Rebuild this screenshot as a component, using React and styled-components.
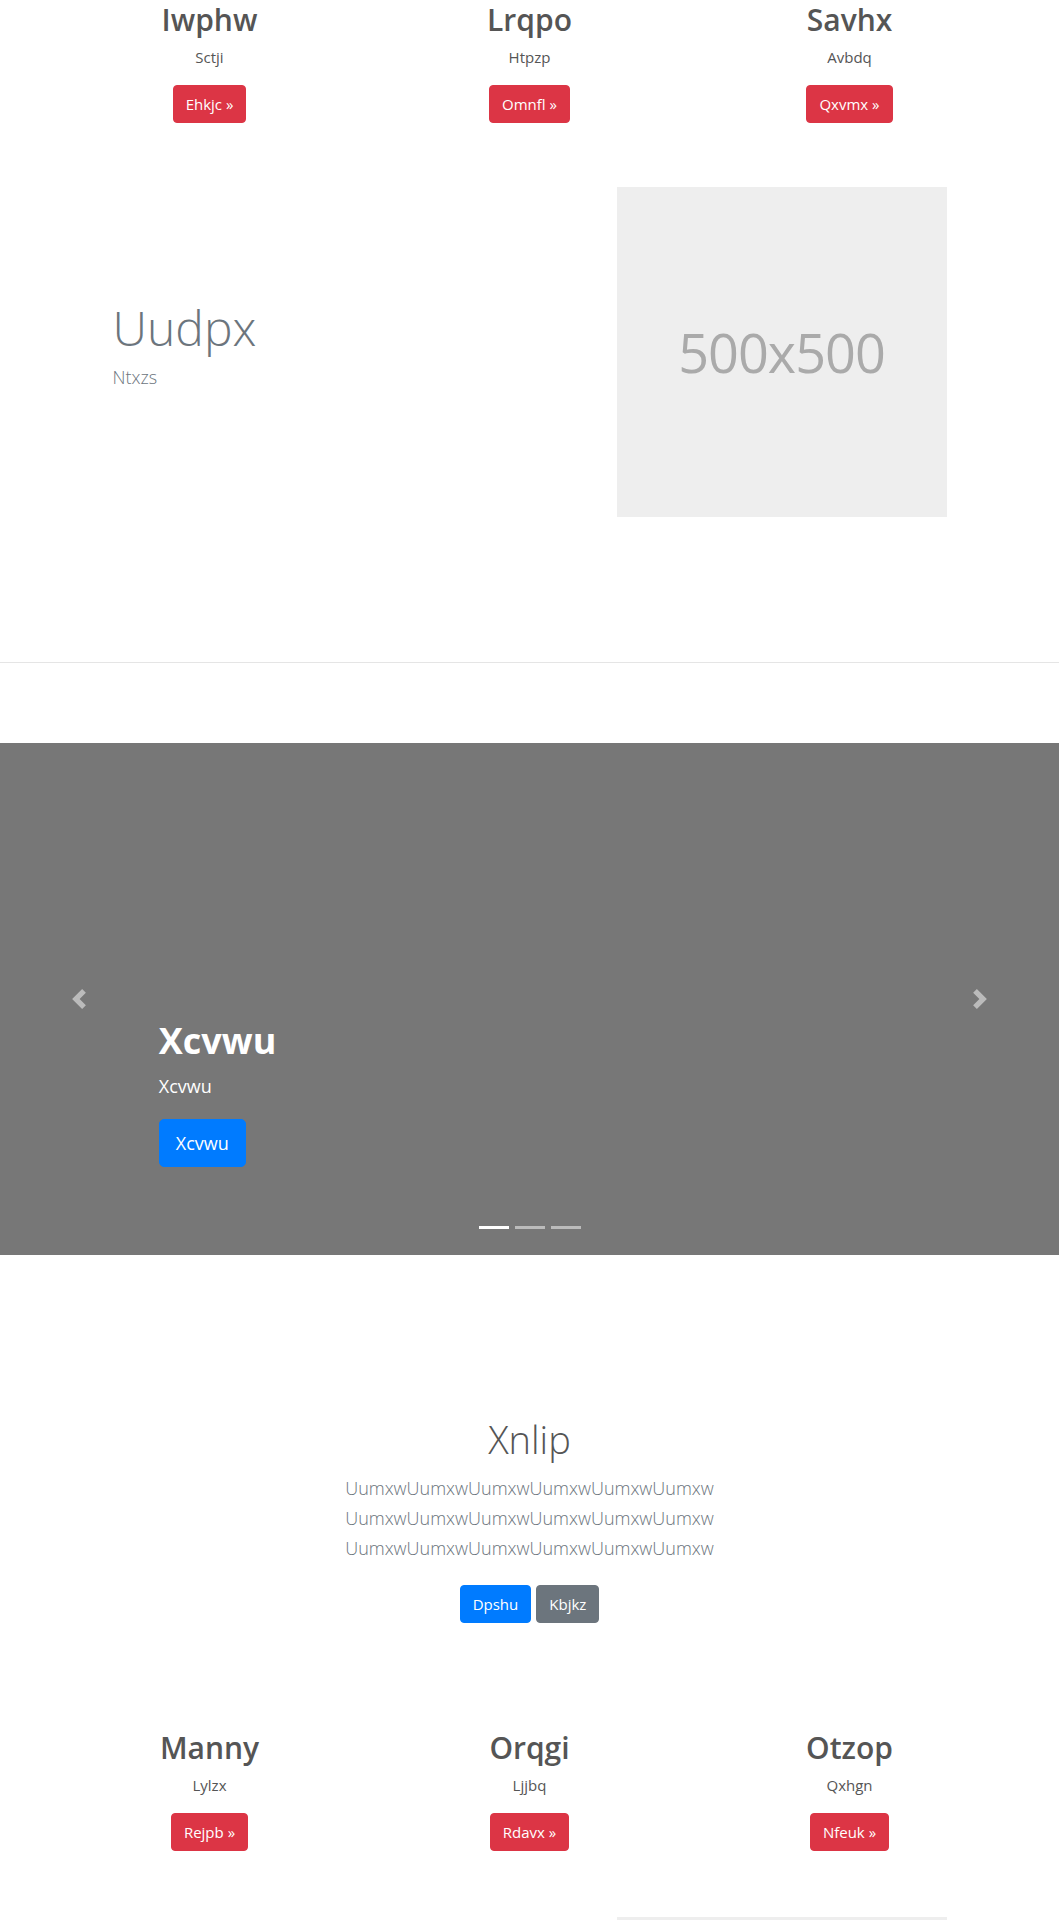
import React from "react";
import styled, { createGlobalStyle } from "styled-components";

const GlobalStyle = createGlobalStyle`
  body {
    margin: 0;
    background: #fff;
    color: #555;
    font-family: "Open Sans", "Noto Sans", Arial, sans-serif;
  }
  * { box-sizing: border-box; }
`;

const colors = {
  danger: "#dc3545",
  primary: "#007bff",
  secondary: "#6c757d",
};

const Page = styled.main`
  padding-top: 2px;
`;

// 세 칸짜리 카드 묶음
const Columns = styled.section`
  width: 960px;
  margin: ${(p) => p.$top || 0}px auto 0;
  display: grid;
  grid-template-columns: repeat(3, 1fr);
  text-align: center;
`;

const Column = styled.div`
  padding: 0 15px;
`;

const ColTitle = styled.h2`
  margin: 0 0 9px;
  font-size: 30px;
  font-weight: 600;
  line-height: 1.2;
  color: #555;
`;

const ColText = styled.p`
  margin: 0 0 17px;
  font-size: 15px;
  line-height: 21px;
  color: #555;
`;

const Button = styled.a`
  display: inline-block;
  padding: ${(p) => (p.$large ? "11px 16px" : "6px 12px")};
  border: 1px solid ${(p) => colors[p.$variant]};
  border-radius: ${(p) => (p.$large ? "5px" : "4px")};
  background: ${(p) => colors[p.$variant]};
  color: #fff;
  font-size: ${(p) => (p.$large ? "18px" : "15px")};
  line-height: 24px;
  text-decoration: none;
  cursor: pointer;
`;

// 이미지 있는 소개 줄
const Feature = styled.section`
  width: 960px;
  margin: ${(p) => p.$top || 64}px auto 0;
  padding: 0 63px;
  display: flex;
  align-items: center;
  justify-content: space-between;
`;

const FeatureText = styled.div`
  padding-bottom: 14px;
`;

const FeatureTitle = styled.h2`
  margin: 0 0 8px;
  font-size: 48px;
  font-weight: 300;
  line-height: 1.2;
  color: #6c757d;
`;

const FeatureSub = styled.p`
  margin: 0;
  font-size: 18px;
  font-weight: 300;
  line-height: 27px;
  color: #6c757d;
`;

const Placeholder = styled.div`
  width: 330px;
  height: 330px;
  flex-shrink: 0;
  display: flex;
  align-items: center;
  justify-content: center;
  background: #eee;
  color: #aaa;
  font-size: 54px;
  letter-spacing: -1px;
`;

const Divider = styled.hr`
  margin: 145px 0 80px;
  border: 0;
  border-top: 1px solid #e5e5e5;
`;

// 캐러셀
const Carousel = styled.section`
  position: relative;
  height: 512px;
  background: #777;
  display: flex;
  flex-direction: column;
  justify-content: flex-end;
  padding: 0 15% 88px;
  color: #fff;
`;

const SlideTitle = styled.h1`
  margin: 0 0 10px;
  font-size: 36px;
  font-weight: 700;
  line-height: 1.25;
`;

const SlideText = styled.p`
  margin: 0 0 19px;
  font-size: 18px;
  font-weight: 500;
  line-height: 27px;
`;

const Control = styled.a`
  position: absolute;
  top: 0;
  bottom: 0;
  ${(p) => (p.$side === "prev" ? "left: 0;" : "right: 0;")}
  width: 15%;
  display: flex;
  align-items: center;
  justify-content: center;
  opacity: 0.5;
`;

const Indicators = styled.ol`
  position: absolute;
  left: 0;
  right: 0;
  bottom: 26px;
  margin: 0;
  padding: 0;
  list-style: none;
  display: flex;
  justify-content: center;
`;

const Indicator = styled.li`
  width: 30px;
  height: 3px;
  margin: 0 3px;
  background: #fff;
  opacity: ${(p) => (p.$active ? 1 : 0.5)};
`;

// 가운데 소개 영역
const Intro = styled.section`
  margin-top: 162px;
  text-align: center;
`;

const IntroTitle = styled.h1`
  margin: 0 0 10px;
  font-size: 38px;
  font-weight: 300;
  line-height: 1.2;
  color: #555;
`;

const Lead = styled.p`
  max-width: 420px;
  margin: 0 auto 22px;
  font-size: 18px;
  font-weight: 300;
  line-height: 30px;
  color: #6c757d;
`;

const ButtonRow = styled.div`
  display: flex;
  justify-content: center;
  gap: 5px;
`;

const Chevron = ({ flip }) => (
  <svg
    width="20"
    height="20"
    viewBox="0 0 8 8"
    style={flip ? { transform: "scaleX(-1)" } : undefined}
  >
    <path fill="#fff" d="M5.25 0l-4 4 4 4 1.5-1.5L4.25 4l2.5-2.5L5.25 0z" />
  </svg>
);

const topCols = [
  { title: "Iwphw", text: "Sctji", btn: "Ehkjc" },
  { title: "Lrqpo", text: "Htpzp", btn: "Omnfl" },
  { title: "Savhx", text: "Avbdq", btn: "Qxvmx" },
];

const bottomCols = [
  { title: "Manny", text: "Lylzx", btn: "Rejpb" },
  { title: "Orqgi", text: "Ljjbq", btn: "Rdavx" },
  { title: "Otzop", text: "Qxhgn", btn: "Nfeuk" },
];

const lead = "UumxwUumxwUumxwUumxwUumxwUumxw";

function ColumnRow({ items, top }) {
  return (
    <Columns $top={top}>
      {items.map((c) => (
        <Column key={c.title}>
          <ColTitle>{c.title}</ColTitle>
          <ColText>{c.text}</ColText>
          <Button $variant="danger">{c.btn} &raquo;</Button>
        </Column>
      ))}
    </Columns>
  );
}

export default function App() {
  return (
    <Page>
      <GlobalStyle />
      <ColumnRow items={topCols} />

      <Feature>
        <FeatureText>
          <FeatureTitle>Uudpx</FeatureTitle>
          <FeatureSub>Ntxzs</FeatureSub>
        </FeatureText>
        <Placeholder>500x500</Placeholder>
      </Feature>

      <Divider />

      <Carousel>
        <SlideTitle>Xcvwu</SlideTitle>
        <SlideText>Xcvwu</SlideText>
        <div>
          <Button $variant="primary" $large>
            Xcvwu
          </Button>
        </div>
        <Control $side="prev">
          <Chevron />
        </Control>
        <Control $side="next">
          <Chevron flip />
        </Control>
        <Indicators>
          <Indicator $active />
          <Indicator />
          <Indicator />
        </Indicators>
      </Carousel>

      <Intro>
        <IntroTitle>Xnlip</IntroTitle>
        <Lead>
          {lead} {lead} {lead}
        </Lead>
        <ButtonRow>
          <Button $variant="primary">Dpshu</Button>
          <Button $variant="secondary">Kbjkz</Button>
        </ButtonRow>
      </Intro>

      <ColumnRow items={bottomCols} top={107} />

      <Feature $top={66}>
        <div />
        <Placeholder>500x500</Placeholder>
      </Feature>
    </Page>
  );
}
